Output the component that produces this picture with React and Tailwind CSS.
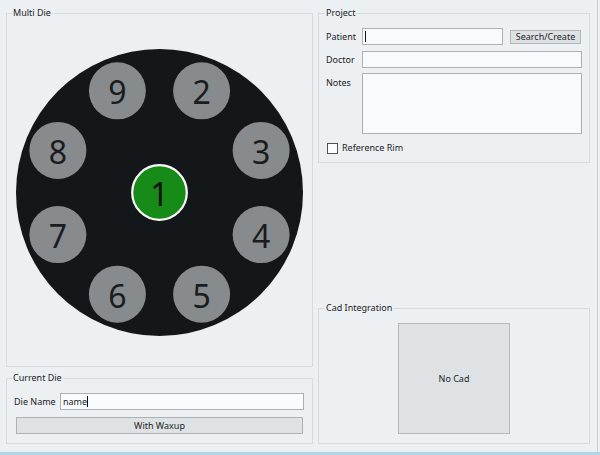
const DIES = [2, 3, 4, 5, 6, 7, 8, 9];

const Field = ({ className = "", children }) => (
  <div
    className={`h-[17px] border border-[#abb1b5] bg-[#f8fbfd] flex items-center px-[2px] ${className}`}
  >
    {children}
  </div>
);

const Caret = () => <span className="inline-block h-[11px] w-px bg-[#111]" />;

function DieWheel() {
  const c = 143.5;
  return (
    <svg width="287" height="287" viewBox="0 0 287 287">
      <circle cx={c} cy={c} r={143.5} fill="#131719" />
      {DIES.map((n, i) => {
        const a = ((i * 45 + 22.5) * Math.PI) / 180;
        const x = c + Math.sin(a) * 110;
        const y = c - Math.cos(a) * 110;
        return (
          <g key={n}>
            <circle cx={x} cy={y} r={28.5} fill="#878b8d" />
            <text
              x={x}
              y={y + 1}
              textAnchor="middle"
              dominantBaseline="central"
              fontFamily="'Noto Sans', sans-serif"
              fontSize="32"
              fill="#1a1c1e"
            >
              {n}
            </text>
          </g>
        );
      })}
      <circle cx={c} cy={c} r={27.3} fill="#168b18" stroke="#ffffff" strokeWidth="2.2" />
      <text
        x={c}
        y={c + 1}
        textAnchor="middle"
        dominantBaseline="central"
        fontFamily="'Noto Sans', sans-serif"
        fontSize="33"
        fill="#0e120e"
      >
        1
      </text>
    </svg>
  );
}

export default function App() {
  return (
    <div className="w-[600px] h-[455px] bg-[#ecf0f3] flex flex-col font-['Noto_Sans',sans-serif] text-[9px] leading-[12px] text-[#222]">
      <div className="flex-1 min-h-0 flex gap-[5px] mr-[2px] border-r border-[#c9ced1] pl-[6px] pr-[7px] pt-[7px] pb-[8px]">
        {/* left column */}
        <div className="w-[307px] flex flex-col gap-[5px]">
          <fieldset className="flex-1 min-h-0 border border-[#d6dbde] flex items-center justify-center">
            <legend className="ml-[5px] px-px leading-[12px]">Multi Die</legend>
            <DieWheel />
          </fieldset>

          <fieldset className="h-[72px] border border-[#d6dbde] flex flex-col pl-[7px] pr-[8px] pt-[9px]">
            <legend className="ml-[-2px] px-px leading-[12px]">Current Die</legend>
            <div className="flex items-center">
              <span className="w-[46px] shrink-0">Die Name</span>
              <Field className="flex-1 border-[#4a93d8] bg-[#f9fcfe]">
                <span>name</span>
                <Caret />
              </Field>
            </div>
            <button className="mt-[7px] ml-[2px] mr-px h-[17px] border border-[#adb1b4] bg-[#dee2e5] text-center">
              With Waxup
            </button>
          </fieldset>
        </div>

        {/* right column */}
        <div className="flex-1 flex flex-col justify-between">
          <fieldset className="h-[156px] border border-[#d6dbde] flex flex-col pl-[7px] pr-[7px] pt-[9px]">
            <legend className="ml-[-1px] px-px leading-[12px]">Project</legend>
            <div className="flex items-center">
              <span className="w-[36px] shrink-0">Patient</span>
              <Field className="w-[141px]">
                <Caret />
              </Field>
              <button className="ml-[7px] h-[14px] w-[71px] border border-[#b3b7ba] bg-[#dde1e4] text-center leading-[12px]">
                Search/Create
              </button>
            </div>
            <div className="flex items-center mt-[6px]">
              <span className="w-[36px] shrink-0">Doctor</span>
              <Field className="flex-1" />
            </div>
            <div className="flex items-start mt-[5px]">
              <span className="w-[36px] shrink-0 mt-[4px]">Notes</span>
              <div className="flex-1 h-[61px] border border-[#abb1b5] bg-[#f8fbfd]" />
            </div>
            <label className="flex items-center mt-[8px] ml-px gap-[4px]">
              <span className="w-[11px] h-[11px] border border-[#4f5457] bg-[#fbfdfe]" />
              <span>Reference Rim</span>
            </label>
          </fieldset>

          <fieldset className="h-[142px] border border-[#d6dbde] flex items-center justify-center pt-[9px] pb-[9px]">
            <legend className="ml-[6px] px-px leading-[12px]">Cad Integration</legend>
            <div className="w-[112px] h-[111px] border border-[#b5babd] bg-[#dee2e5] flex items-center justify-center">
              No Cad
            </div>
          </fieldset>
        </div>
      </div>
      <div className="h-px bg-[#c4c9cc]" />
      <div className="h-[2px] bg-[#a9dbf0]" />
    </div>
  );
}
